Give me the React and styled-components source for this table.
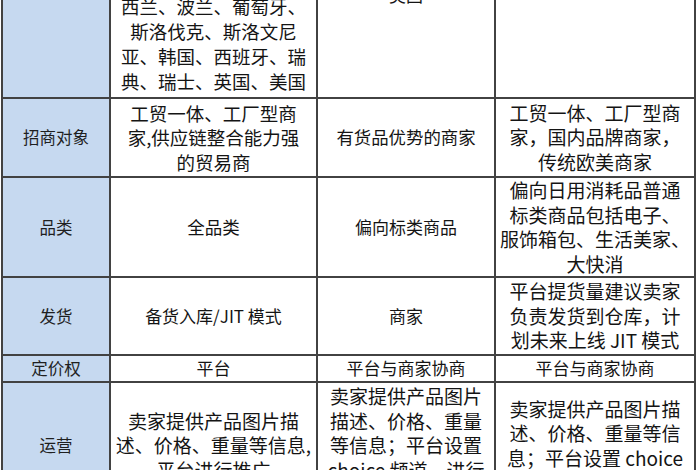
import styled, { createGlobalStyle } from 'styled-components';

const Global = createGlobalStyle`
  html, body { margin: 0; padding: 0; background: #fff; }
  body { font-family: "Noto Sans CJK SC", "Noto Sans", sans-serif; }
`;

const Frame = styled.div`
  width: 700px;
  height: 470px;
  overflow: hidden;
  background: #fff;
`;

const Table = styled.table`
  border-collapse: collapse;
  table-layout: fixed;
  width: 695px;
  margin: -109px 0 0 1px;
  color: #141414;
`;

const Col = styled.col`
  width: ${(p) => p.$w}px;
`;

const Row = styled.tr`
  height: ${(p) => p.$h}px;
`;

const Cell = styled.td`
  border: 2px solid #424242;
  padding: 0 2px ${(p) => p.$pb || 0}px;
  text-align: center;
  vertical-align: middle;
  white-space: nowrap;
  font-size: ${(p) => p.$size || 17}px;
  line-height: ${(p) => p.$lh || 24.5}px;
`;

const Label = styled(Cell)`
  background: #c6d9f0;
  font-size: 16.5px;
  color: #1f1f1f;
`;

const rows = [
  {
    label: '',
    h: 206,
    cells: [
      {
        size: 18.5,
        lh: 25,
        pb: 2,
        lines: [
          '德国、法国、意大利、荷',
          '兰、比利时、奥地利、捷',
          '克、匈牙利、罗马尼亚、',
          '希腊、爱尔兰、日本、新',
          '西兰、波兰、葡萄牙、',
          '斯洛伐克、斯洛文尼',
          '亚、韩国、西班牙、瑞',
          '典、瑞士、英国、美国',
        ],
      },
      { size: 17, lines: ['美国'] },
      { lines: [] },
    ],
  },
  {
    label: '招商对象',
    h: 79,
    cells: [
      { size: 18.5, lines: ['工贸一体、工厂型商', '家,供应链整合能力强', '的贸易商'] },
      { size: 17.4, lines: ['有货品优势的商家'] },
      { size: 19, lines: ['工贸一体、工厂型商', '家，国内品牌商家，', '传统欧美商家'] },
    ],
  },
  {
    label: '品类',
    h: 100,
    cells: [
      { size: 17.5, lines: ['全品类'] },
      { size: 17, lines: ['偏向标类商品'] },
      { size: 19, lines: ['偏向日用消耗品普通', '标类商品包括电子、', '服饰箱包、生活美家、', '大快消'] },
    ],
  },
  {
    label: '发货',
    h: 78,
    cells: [
      { size: 17, lines: ['备货入库/JIT 模式'] },
      { size: 17, lines: ['商家'] },
      { size: 19, lines: ['平台提货量建议卖家', '负责发货到仓库，计', '划未来上线 JIT 模式'] },
    ],
  },
  {
    label: '定价权',
    h: 24,
    cells: [
      { size: 17, lines: ['平台'] },
      { size: 17, lines: ['平台与商家协商'] },
      { size: 17, lines: ['平台与商家协商'] },
    ],
  },
  {
    label: '运营',
    h: 128,
    cells: [
      { size: 19, lines: ['卖家提供产品图片描', '述、价格、重量等信息,', '平台进行推广'] },
      { size: 19, lines: ['卖家提供产品图片', '描述、价格、重量', '等信息；平台设置', 'choice 频道，进行', '推广'] },
      { size: 19, lines: ['卖家提供产品图片描', '述、价格、重量等信', '息；平台设置 choice', '频道，进行推广'] },
    ],
  },
];

function Lines({ lines }) {
  return lines.map((l, i) => (
    <span key={i}>
      {i > 0 && <br />}
      {l}
    </span>
  ));
}

export default function App() {
  return (
    <>
      <Global />
      <Frame>
        <Table>
          <colgroup>
            <Col $w={108} />
            <Col $w={207} />
            <Col $w={178} />
            <Col $w={200} />
          </colgroup>
          <tbody>
            {rows.map((r, ri) => (
              <Row key={ri} $h={r.h}>
                <Label>{r.label}</Label>
                {r.cells.map((c, i) => (
                  <Cell key={i} $size={c.size} $lh={c.lh} $pb={c.pb}>
                    <Lines lines={c.lines} />
                  </Cell>
                ))}
              </Row>
            ))}
          </tbody>
        </Table>
      </Frame>
    </>
  );
}
